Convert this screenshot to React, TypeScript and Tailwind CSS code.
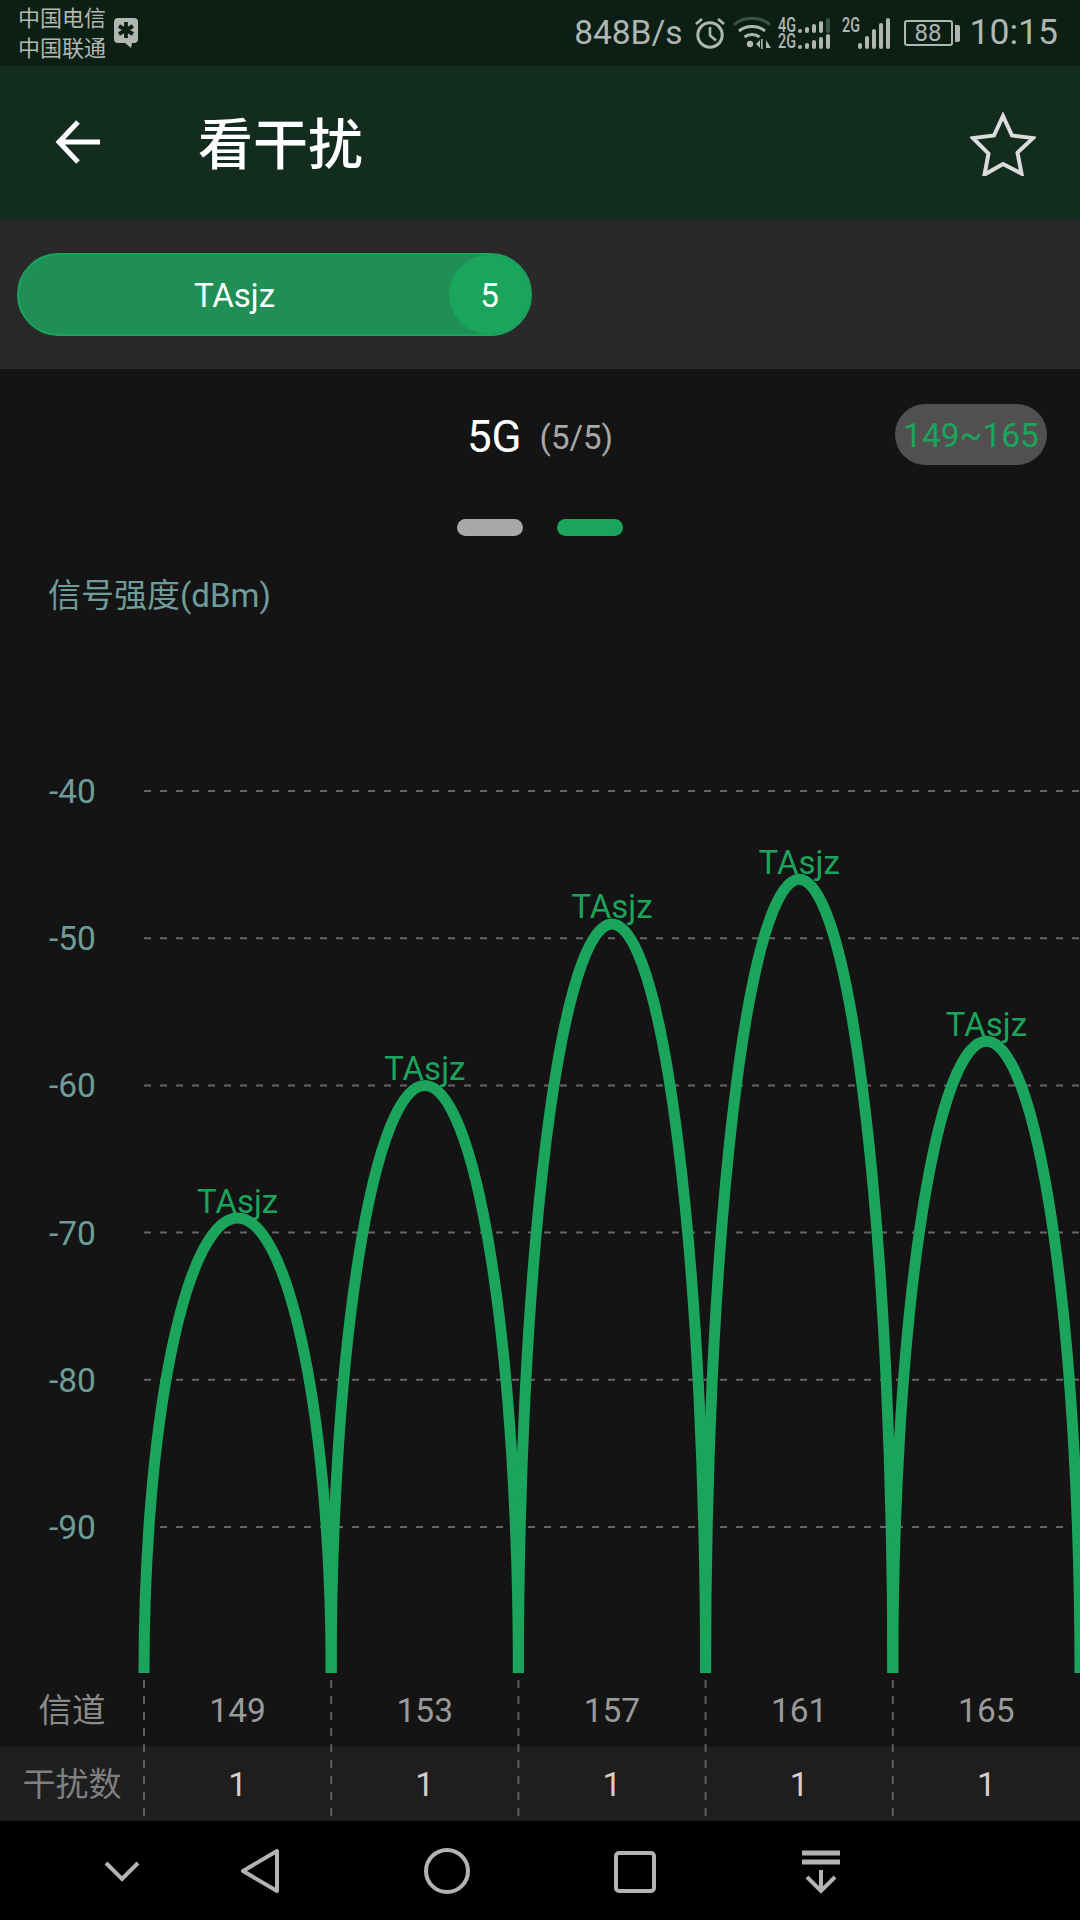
import React from 'react'

const CHANNELS = [
  { id: 149, dbm: -69 },
  { id: 153, dbm: -60 },
  { id: 157, dbm: -49 },
  { id: 161, dbm: -46 },
  { id: 165, dbm: -57 },
]

const GREEN = '#1ba55c'
const CHART_TOP = 640
const BASE_Y = 1673 - CHART_TOP
const LEFT = 144
const STEP = 187.2

function dbmToY(v: number) {
  return 791 - CHART_TOP + (-40 - v) * 14.72
}

function SpeechBadge() {
  return (
    <svg width="26" height="32" viewBox="0 0 26 32">
      <path d="M5 1h16a4 4 0 0 1 4 4v17a4 4 0 0 1-4 4h-2l-1 5-6-5H5a4 4 0 0 1-4-4V5a4 4 0 0 1 4-4z" fill="#b0b6b2" />
      <g stroke="#0c1f15" strokeWidth="3.8" strokeLinecap="butt">
        <path d="M13 5v16" />
        <path d="M6 9l14 8" />
        <path d="M20 9L6 17" />
      </g>
    </svg>
  )
}

function Alarm() {
  return (
    <svg width="32" height="32" viewBox="0 0 32 32" fill="none" stroke="#b0b6b2">
      <circle cx="16" cy="18" r="12.200" strokeWidth="3" />
      <path d="M16 10v8.500l6 5" strokeWidth="2.600" />
      <path d="M2 7l6-5M30 7l-6-5" strokeWidth="2.800" />
    </svg>
  )
}

function Wifi() {
  return (
    <svg width="40" height="32" viewBox="0 0 40 32" fill="none">
      <path d="M2 8C11 -1 29 -1 38 8" stroke="#3d5247" strokeWidth="3" />
      <path d="M7 14c7-6 19-6 26 0" stroke="#b0b6b2" strokeWidth="3" />
      <path d="M12.500 20c4-3.400 11-3.400 15 0" stroke="#b0b6b2" strokeWidth="3" />
      <circle cx="18" cy="27" r="3.200" fill="#b0b6b2" />
      <path d="M24 27l4-4v8zM34 23l5 8h-5zM29 22h1.600v10H29z" fill="#b0b6b2" />
    </svg>
  )
}

function Bars({ heights, dim, gap = 3, w = 4 }: { heights: number[]; dim?: boolean; gap?: number; w?: number }) {
  const max = Math.max(...heights)
  return (
    <svg width={heights.length * (w + gap) - gap} height={max} viewBox={`0 0 ${heights.length * (w + gap) - gap} ${max}`}>
      {heights.map((h, i) => (
        <rect
          key={i}
          x={i * (w + gap)}
          y={max - h}
          width={w}
          height={h}
          rx={w / 2}
          fill={dim && i === heights.length - 1 ? '#3d5247' : '#b0b6b2'}
        />
      ))}
    </svg>
  )
}

function DualSim() {
  return (
    <div className="flex flex-col gap-[1px] w-[52px] text-[#b0b6b2]">
      <div className="flex items-end h-[15px] justify-between">
        <span className="w-[18px] text-[20px] leading-[15px] font-medium scale-x-[0.72] origin-left">4G</span>
        <Bars heights={[4, 6, 9, 12, 15]} dim />
      </div>
      <div className="flex items-end h-[15px] justify-between">
        <span className="w-[18px] text-[20px] leading-[15px] font-medium scale-x-[0.72] origin-left">2G</span>
        <Bars heights={[4, 6, 9, 12, 15]} />
      </div>
    </div>
  )
}

function StatusBar() {
  return (
    <div className="h-[66px] bg-[#0c1f15] flex items-center text-[#b0b6b2] shrink-0">
      <div className="ml-[18px] flex flex-col text-[22px] leading-[30px] pt-[2px]">
        <span>中国电信</span>
        <span>中国联通</span>
      </div>
      <div className="ml-[7px]">
        <SpeechBadge />
      </div>
      <div className="ml-auto mr-[22px] flex items-center">
        <span className="text-[33.5px] leading-none">848B/s</span>
        <div className="ml-[11px] flex items-center">
          <Alarm />
        </div>
        <div className="ml-[6px]">
          <Wifi />
        </div>
        <div className="ml-[6px]">
          <DualSim />
        </div>
        <div className="ml-[12px] relative w-[48px] h-[31px]">
          <span className="absolute left-0 top-0 text-[20px] leading-[15px] font-medium scale-x-[0.72] origin-left">2G</span>
          <div className="absolute right-0 bottom-0">
            <Bars heights={[6, 13, 20, 26, 31]} gap={3} w={4} />
          </div>
        </div>
        <div className="ml-[14px] flex items-center">
          <div className="w-[49px] h-[26px] rounded-[3px] border-2 border-[#b0b6b2] flex items-center justify-center text-[24px] leading-none">
            88
          </div>
          <div className="ml-[2px] w-[5px] h-[17px] rounded-r-[2px] bg-[#b0b6b2]" />
        </div>
        <span className="ml-[10px] text-[35.5px] leading-none">10:15</span>
      </div>
    </div>
  )
}

function Header() {
  return (
    <div className="h-[154px] bg-[#132c20] flex items-center shrink-0 text-white">
      <svg width="46" height="46" viewBox="0 0 46 46" fill="none" stroke="#fff" strokeWidth="5" className="ml-[55px] mt-[-2px]">
        <path d="M45 23H4M23 3L4 23l19 20" />
      </svg>
      <h1 className="ml-[97px] text-[55px] leading-none font-medium mt-[5px]">看干扰</h1>
      <svg width="66" height="64" viewBox="0 0 66 64" fill="none" stroke="#dcdcdc" strokeWidth="4" strokeLinejoin="miter" className="ml-auto mr-[44px] mt-[1px]">
        <path d="M33 4l9 19.500 21 2.600-15.500 14.500 4 21L33 52 14.500 62.600l4-21L3 26.100l21-2.600z" />
      </svg>
    </div>
  )
}

function ApTabs() {
  return (
    <div className="h-[149px] bg-[#292929] flex items-center shrink-0">
      <div className="ml-[17px] w-[515px] h-[83px] rounded-full bg-[#1f8f55] border-2 border-[#1ba55c] flex items-center relative overflow-hidden">
        <span className="w-[431px] text-center text-[33px] text-white pt-[3px]">TAsjz</span>
        <div className="absolute right-0 top-0 bottom-0 w-[81px] rounded-full bg-[#1ba55c] flex items-center justify-center text-[33px] text-white pt-[3px]">
          5
        </div>
      </div>
    </div>
  )
}

function Chart() {
  const gridVals = [-40, -50, -60, -70, -80, -90]
  return (
    <svg width="1080" height={BASE_Y} viewBox={`0 0 1080 ${BASE_Y}`} className="block shrink-0">
      {gridVals.map((v) => (
        <g key={v}>
          <line
            x1={LEFT}
            x2="1080"
            y1={dbmToY(v)}
            y2={dbmToY(v)}
            stroke="#666"
            strokeWidth="2"
            strokeDasharray="7 9"
          />
          <text x="49" y={dbmToY(v) + 12} fontSize="33.5" fill="#6d9c9a">
            {v}
          </text>
        </g>
      ))}
      {CHANNELS.map((c, i) => {
        const x0 = LEFT + i * STEP
        const x1 = x0 + STEP
        const top = dbmToY(c.dbm)
        return (
          <g key={c.id}>
            <path
              d={`M${x0} ${BASE_Y}A${STEP / 2} ${BASE_Y - top} 0 0 1 ${x1} ${BASE_Y}`}
              fill="none"
              stroke={GREEN}
              strokeWidth="11"
            />
            <text x={(x0 + x1) / 2} y={top - 5} fontSize="33" fill={GREEN} textAnchor="middle">
              TAsjz
            </text>
          </g>
        )
      })}
    </svg>
  )
}

function ChannelTable() {
  return (
    <div className="relative shrink-0">
      <div className="h-[74px] flex items-center text-[33.5px] text-[#9a9a9a] pt-[2px]">
        <span className="w-[144px] text-center text-[#8a8a8a]">信道</span>
        {CHANNELS.map((c) => (
          <span key={c.id} className="w-[187.2px] text-center">
            {c.id}
          </span>
        ))}
      </div>
      <div className="h-[74px] flex items-center text-[33.5px] bg-[#1e1e1e] text-[#d8cfcc] pt-[2px]">
        <span className="w-[144px] text-center text-[#808080] text-[33px]">干扰数</span>
        {CHANNELS.map((c) => (
          <span key={c.id} className="w-[187.2px] text-center">
            1
          </span>
        ))}
      </div>
      <svg width="1080" height="148" viewBox="0 0 1080 148" className="absolute left-0 top-0 pointer-events-none">
        {CHANNELS.map((c, i) => (
          <line
            key={c.id}
            x1={LEFT + i * STEP}
            x2={LEFT + i * STEP}
            y1="7"
            y2="148"
            stroke="#5e5e5e"
            strokeWidth="2"
            strokeDasharray="8 8"
          />
        ))}
      </svg>
    </div>
  )
}

function NavBar() {
  return (
    <div className="h-[99px] bg-black shrink-0">
      <svg width="1080" height="99" viewBox="0 1821 1080 99" fill="none" stroke="#b3b3b3" strokeWidth="4" className="block">
        <path d="M106 1863l16 16 16-16" />
        <path d="M277 1851v40l-34-20z" strokeLinejoin="round" />
        <circle cx="447" cy="1871" r="21" />
        <rect x="616" y="1853" width="38" height="38" rx="3" />
        <path d="M802 1853h38M802 1862h38" strokeWidth="5" />
        <path d="M821 1870v21M807 1877l14 14 14-14" />
      </svg>
    </div>
  )
}

export default function App() {
  return (
    <div className="w-[1080px] h-[1920px] flex flex-col overflow-hidden bg-[#141414] font-['Roboto','Noto_Sans_CJK_SC',sans-serif]">
      <StatusBar />
      <Header />
      <ApTabs />
      <main className="flex-1 flex flex-col min-h-0 relative">
        {/* Band title with channel range chip */}
        <div className="h-[96px] pt-[40px] flex items-center justify-center relative">
          <span className="text-[44px] leading-none text-white">5G</span>
          <span className="ml-[18px] text-[33px] leading-none text-[#a8a8a8]">(5/5)</span>
          <div className="absolute left-[895px] top-[35px] w-[152px] h-[61px] rounded-full bg-[#505050] flex items-center justify-center text-[33.5px] leading-none text-[#1ba55c] pt-[3px]">
            149~165
          </div>
        </div>
        {/* Pager */}
        <div className="mt-[54px] flex justify-center gap-[34px]">
          <div className="w-[66px] h-[17px] rounded-full bg-[#a9a9a9]" />
          <div className="w-[66px] h-[17px] rounded-full bg-[#1ba55c]" />
        </div>
        <div className="mt-[40px] ml-[48px] h-[40px] text-[33px] leading-[40px] text-[#6d9c9a]">信号强度(dBm)</div>
        <div className="absolute left-0 top-[271px]">
          <Chart />
        </div>
        <div className="mt-auto">
          <ChannelTable />
        </div>
      </main>
      <NavBar />
    </div>
  )
}
